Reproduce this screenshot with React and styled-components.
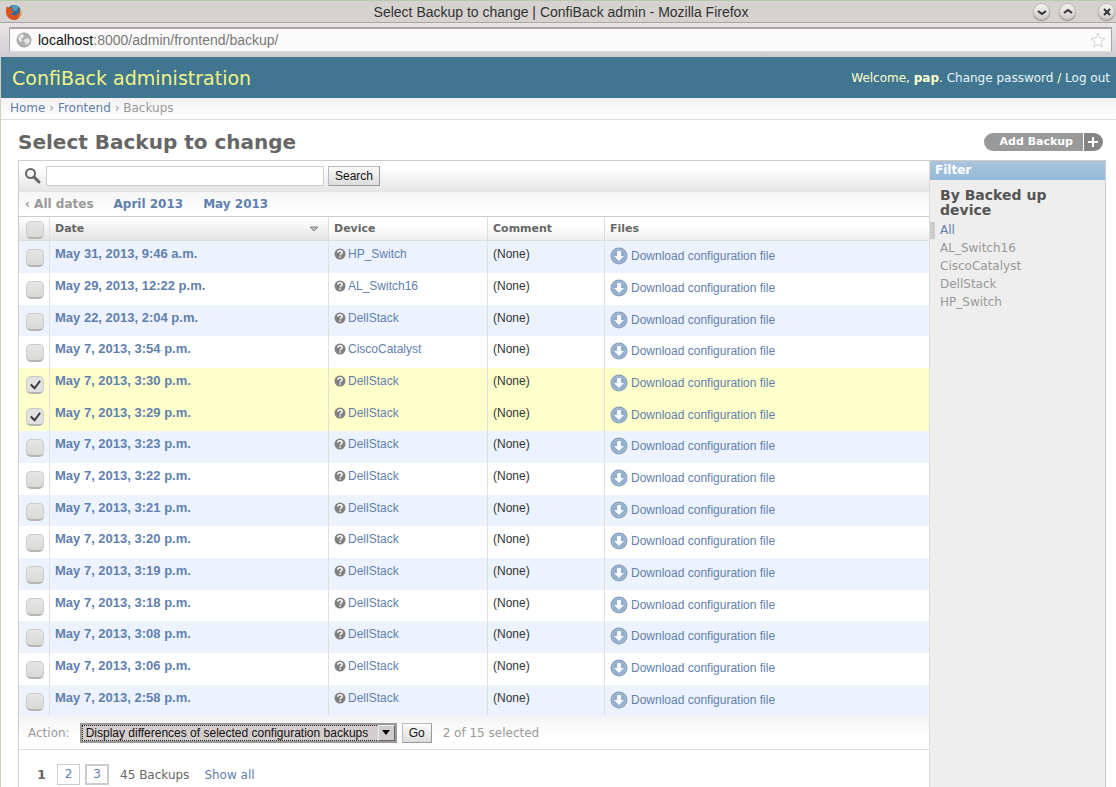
import React, { useState } from "react";
import styled, { createGlobalStyle, css } from "styled-components";

const devices = ["AL_Switch16", "CiscoCatalyst", "DellStack", "HP_Switch"];

const initialBackups = [
  { date: "May 31, 2013, 9:46 a.m.", device: "HP_Switch" },
  { date: "May 29, 2013, 12:22 p.m.", device: "AL_Switch16" },
  { date: "May 22, 2013, 2:04 p.m.", device: "DellStack" },
  { date: "May 7, 2013, 3:54 p.m.", device: "CiscoCatalyst" },
  { date: "May 7, 2013, 3:30 p.m.", device: "DellStack", selected: true },
  { date: "May 7, 2013, 3:29 p.m.", device: "DellStack", selected: true },
  { date: "May 7, 2013, 3:23 p.m.", device: "DellStack" },
  { date: "May 7, 2013, 3:22 p.m.", device: "DellStack" },
  { date: "May 7, 2013, 3:21 p.m.", device: "DellStack" },
  { date: "May 7, 2013, 3:20 p.m.", device: "DellStack" },
  { date: "May 7, 2013, 3:19 p.m.", device: "DellStack" },
  { date: "May 7, 2013, 3:18 p.m.", device: "DellStack" },
  { date: "May 7, 2013, 3:08 p.m.", device: "DellStack" },
  { date: "May 7, 2013, 3:06 p.m.", device: "DellStack" },
  { date: "May 7, 2013, 2:58 p.m.", device: "DellStack" },
];

const FirefoxIcon = () => (
  <svg width="18" height="18" viewBox="0 0 18 18" aria-hidden="true">
    <circle cx="9" cy="9" r="7" fill="#2b6c9c" />
    <path d="M7 3c2-1 5-1 7 1l-2 1 1 2-3 1-2-1z" fill="#4fa3c4" />
    <path
      d="M2 3c0 1 1 1 2 2 1-1 3-1 4 0L6 7c1 1 2 1 3 1 0 2-2 2-3 3 2 2 6 2 8-1 1-2 1-4 0-6 2 2 3 5 2 8-1 3-4 5-7 5-5 0-8-4-8-8 0-2 0-4 1-6z"
      fill="#d9541e"
    />
    <path d="M15 5c2 4 1 8-2 10 1-2 2-3 2-5z" fill="#f2b13c" />
  </svg>
);

const GlobeIcon = () => (
  <svg width="16" height="16" viewBox="0 0 16 16" aria-hidden="true">
    <circle cx="8" cy="8" r="7" fill="#b0b0b0" stroke="#a0a0a0" />
    <path d="M2 6l3-4 3 1-1 3-2 1 1 2-2 1zM9 7l3-1 2 2-1 3-3 2-1-3-2-1z" fill="#e6e6e6" />
  </svg>
);

const StarIcon = () => (
  <svg width="18" height="18" viewBox="0 0 18 18" aria-hidden="true">
    <path
      d="M9 2l2 5 5 .5-4 3.500 1.200 5L9 13.500 4.800 16 6 11 2 7.500 7 7z"
      fill="#fff"
      stroke="#d0d0d0"
    />
  </svg>
);

const SearchIcon = () => (
  <svg width="18" height="18" viewBox="0 0 18 18" aria-hidden="true">
    <circle cx="6.500" cy="6.500" r="4.500" fill="none" stroke="#666" strokeWidth="2" />
    <path d="M10 10l5 5" stroke="#666" strokeWidth="3" strokeLinecap="round" />
  </svg>
);

const UnknownIcon = () => (
  <svg width="12" height="12" viewBox="0 0 12 12" aria-hidden="true">
    <circle cx="6" cy="6" r="5.500" fill="#808080" />
    <path
      d="M3.800 4.700c0-2.700 4.400-2.600 4.400-.2 0 1.400-2.100 1.300-2.100 2.700M6.100 8.200v1.500"
      fill="none"
      stroke="#fff"
      strokeWidth="1.400"
    />
  </svg>
);

const DownloadIcon = () => (
  <svg width="18" height="18" viewBox="0 0 18 18" aria-hidden="true">
    <circle cx="9" cy="9" r="8.500" fill="#86a0c0" />
    <circle cx="9" cy="9" r="6.800" fill="#92aecb" stroke="#a9bfd8" />
    <path d="M7 4h4v5h3l-5 5-5-5h3z" fill="#f6f9fd" />
  </svg>
);

const TitleBar = () => (
  <TitleRow>
    <FirefoxIcon />
    <WindowTitle>Select Backup to change | ConfiBack admin - Mozilla Firefox</WindowTitle>
    <WindowButtons>
      <RoundButton aria-label="Minimize">
        <svg width="10" height="10" viewBox="0 0 10 10"><path d="M1 4l4 3 4-3" /></svg>
      </RoundButton>
      <RoundButton aria-label="Maximize">
        <svg width="10" height="10" viewBox="0 0 10 10"><path d="M1 6l4-3 4 3" /></svg>
      </RoundButton>
      <RoundButton aria-label="Close" $spaced>
        <svg width="10" height="10" viewBox="0 0 10 10"><path d="M2 2l6 6M8 2l-6 6" /></svg>
      </RoundButton>
    </WindowButtons>
  </TitleRow>
);

const BackupRow = ({ backup, onToggle }) => (
  <Row $selected={backup.selected}>
    <Cell $check>
      <Checkbox
        type="checkbox"
        aria-label={`Select ${backup.date}`}
        checked={!!backup.selected}
        onChange={onToggle}
      />
    </Cell>
    <DateCell scope="row">
      <Link href="#backup">{backup.date}</Link>
    </DateCell>
    <Cell>
      <DeviceLink href="#device">
        <UnknownIcon />
        {backup.device}
      </DeviceLink>
    </Cell>
    <Cell>(None)</Cell>
    <Cell>
      <DownloadLink href="#download">
        <DownloadIcon />
        Download configuration file
      </DownloadLink>
    </Cell>
  </Row>
);

const App = () => {
  const [backups, setBackups] = useState(initialBackups);
  const count = backups.filter((b) => b.selected).length;

  const toggle = (index) => {
    setBackups(
      backups.map((b, i) => (i === index ? { ...b, selected: !b.selected } : b))
    );
  };

  const toggleAll = (ev) => {
    setBackups(backups.map((b) => ({ ...b, selected: ev.target.checked })));
  };

  return (
    <Window>
      <GlobalStyle />
      <TitleBar />
      <AddressRow>
        <AddressBox>
          <GlobeIcon />
          <Address aria-label="Address">
            <b>localhost</b>:8000/admin/frontend/backup/
          </Address>
          <StarIcon />
        </AddressBox>
      </AddressRow>

      <Page>
        <Header>
          <SiteName>ConfiBack administration</SiteName>
          <UserTools>
            Welcome, <strong>pap</strong>. <a href="#password">Change password</a> /{" "}
            <a href="#logout">Log out</a>
          </UserTools>
        </Header>
        <Breadcrumbs>
          <Link href="#home">Home</Link> › <Link href="#frontend">Frontend</Link> › Backups
        </Breadcrumbs>

        <Content>
          <HeadingRow>
            <Heading>Select Backup to change</Heading>
            <AddLink href="#add">
              <AddLabel>Add Backup</AddLabel>
              <AddPlus>
                <svg width="12" height="12" viewBox="0 0 12 12" aria-hidden="true">
                  <path d="M6 1v10M1 6h10" stroke="#fff" strokeWidth="2" />
                </svg>
              </AddPlus>
            </AddLink>
          </HeadingRow>

          <Module>
            <Main>
              <Toolbar>
                <SearchLabel htmlFor="searchbar" aria-label="Search backups">
                  <SearchIcon />
                </SearchLabel>
                <SearchInput id="searchbar" type="text" />
                <Button>Search</Button>
              </Toolbar>
              <DateNav>
                <MutedLink href="#all">‹ All dates</MutedLink>
                <Link href="#april">April 2013</Link>
                <Link href="#may">May 2013</Link>
              </DateNav>

              <Table>
                <colgroup>
                  <Col $width={31} />
                  <Col $width={279} />
                  <Col $width={159} />
                  <Col $width={117} />
                  <col />
                </colgroup>
                <thead>
                  <tr>
                    <HeadCell $check>
                      <Checkbox
                        type="checkbox"
                        aria-label="Select all backups"
                        checked={count === backups.length}
                        onChange={toggleAll}
                      />
                    </HeadCell>
                    <HeadCell $sorted>
                      <SortLabel>
                        Date
                        <svg width="10" height="6" viewBox="0 0 10 6" aria-hidden="true">
                          <path d="M1 1h8L5 5z" fill="#bbb" stroke="#888" />
                        </svg>
                      </SortLabel>
                    </HeadCell>
                    <HeadCell>Device</HeadCell>
                    <HeadCell>Comment</HeadCell>
                    <HeadCell>Files</HeadCell>
                  </tr>
                </thead>
                <tbody>
                  {backups.map((backup, index) => (
                    <BackupRow
                      key={backup.date}
                      backup={backup}
                      onToggle={() => toggle(index)}
                    />
                  ))}
                </tbody>
              </Table>

              <Actions>
                <label htmlFor="action">Action:</label>
                <SelectWrapper>
                  <Select id="action">
                    <option>Display differences of selected configuration backups</option>
                  </Select>
                  <SelectArrow>
                    <svg width="8" height="5" viewBox="0 0 8 5"><path d="M0 0h8L4 5z" /></svg>
                  </SelectArrow>
                </SelectWrapper>
                <Button>Go</Button>
                <Counter>
                  {count} of {backups.length} selected
                </Counter>
              </Actions>

              <Paginator>
                <CurrentPage>1</CurrentPage>
                <PageLink href="#2">2</PageLink>
                <PageLink href="#3" $last>3</PageLink>
                <Total>45 Backups</Total>
                <Link href="#all">Show all</Link>
              </Paginator>
            </Main>

            <Filter>
              <FilterTitle>Filter</FilterTitle>
              <FilterHeading>By Backed up device</FilterHeading>
              <FilterList>
                <FilterItem $active>
                  <a href="#filter">All</a>
                </FilterItem>
                {devices.map((device) => (
                  <FilterItem key={device}>
                    <a href="#filter">{device}</a>
                  </FilterItem>
                ))}
              </FilterList>
            </Filter>
          </Module>
        </Content>
      </Page>
    </Window>
  );
};

const sans = `"Liberation Sans", Arial, sans-serif`;
const verdana = `"DejaVu Sans", Verdana, sans-serif`;

const GlobalStyle = createGlobalStyle`
  * {
    box-sizing: border-box;
  }

  body {
    margin: 0;
    background: white;
    color: #333;
    font-family: ${verdana};
    font-size: 12px;
  }

  a {
    text-decoration: none;
  }
`;

const Window = styled.div`
  display: flex;
  flex-direction: column;
  min-height: 100vh;
`;

const TitleRow = styled.div`
  display: flex;
  align-items: center;
  height: 23px;
  padding: 0 1px 0 5px;
  background: #d5d2d0;
  border-top: 1px solid #b5cbaa;
  border-bottom: 1px solid #aaa6a4;
`;

const WindowTitle = styled.div`
  flex: 1;
  padding-left: 66px;
  text-align: center;
  color: #333;
  font: 14px/20px ${sans};
`;

const WindowButtons = styled.div`
  display: flex;
  gap: 9px;
`;

const RoundButton = styled.button`
  display: flex;
  align-items: center;
  justify-content: center;
  width: 17px;
  height: 17px;
  padding: 0;
  margin-left: ${(p) => (p.$spaced ? "13px" : "0")};
  border: 1px solid #bbb7b4;
  border-radius: 50%;
  background: linear-gradient(#f4f3f2, #cfccca);
  box-shadow: 0 1px 1px #8c8986;

  svg {
    flex-shrink: 0;
  }

  path {
    fill: none;
    stroke: #333;
    stroke-width: 2;
  }
`;

const AddressRow = styled.div`
  padding: 4px 4px 5px 9px;
  background: linear-gradient(#e8e6e5, #cfcdd2);
`;

const AddressBox = styled.div`
  display: flex;
  align-items: center;
  gap: 6px;
  height: 25px;
  padding: 0 4px 0 6px;
  background: #fcfbfb;
  border: 1px solid #aaa5a3;
  border-top-width: 2px;
  border-bottom-color: #ddd;
`;

const Address = styled.div`
  flex: 1;
  color: #777;
  font: 14px/20px ${sans};

  b {
    color: #111;
    font-weight: normal;
  }
`;

const Page = styled.div`
  display: flex;
  flex: 1;
  flex-direction: column;
  border-left: 1px solid #cfd0c0;
`;

const Header = styled.header`
  display: flex;
  align-items: center;
  justify-content: space-between;
  height: 41px;
  padding: 0 6px 0 11px;
  background: #417690;
  color: #ffc;
`;

const SiteName = styled.h1`
  margin: 0;
  color: #f0f386;
  font-size: 19px;
  font-weight: normal;
`;

const UserTools = styled.div`
  font-size: 12px;

  a {
    color: #e8f4f8;
  }
`;

const Breadcrumbs = styled.nav`
  height: 22px;
  padding: 0 9px;
  background: linear-gradient(#f3f1f3, white);
  border-bottom: 1px solid #ddd;
  color: #999;
  font-size: 12px;
  line-height: 20px;
`;

const Link = styled.a`
  color: #5f80ae;
`;

const MutedLink = styled(Link)`
  color: #999;
`;

const Content = styled.main`
  display: flex;
  flex: 1;
  flex-direction: column;
  padding: 0 10px 0 17px;
`;

const HeadingRow = styled.div`
  display: flex;
  align-items: center;
  justify-content: space-between;
  height: 40px;
  padding: 4px 3px 0 0;
`;

const Heading = styled.h2`
  margin: 0;
  color: #666;
  font-size: 20px;
  line-height: 24px;
`;

const AddLink = styled.a`
  display: flex;
  gap: 1px;
  height: 18px;
  color: white;
  font-weight: bold;
  line-height: 18px;
`;

const AddLabel = styled.span`
  padding: 0 10px 0 16px;
  border-radius: 9px 0 0 9px;
  background: #999;
  font-size: 11px;
`;

const AddPlus = styled.span`
  display: flex;
  align-items: center;
  padding: 0 4px 0 3px;
  border-radius: 0 9px 9px 0;
  background: #858585;
`;

const Module = styled.section`
  display: flex;
  flex: 1;
  border: 1px solid #ccc;
  border-bottom: 0;
`;

const Main = styled.div`
  flex: 1;
  min-width: 0;
`;

const Toolbar = styled.form`
  display: flex;
  align-items: center;
  gap: 4px;
  height: 31px;
  padding: 0 5px 1px;
  background: linear-gradient(white 20%, #e4e4e4);
`;

const SearchLabel = styled.label`
  display: flex;
`;

const SearchInput = styled.input`
  width: 278px;
  height: 20px;
  padding: 0 4px;
  border: 1px solid #ccc;
  font: 12px ${sans};
`;

const Button = styled.button`
  height: 20px;
  padding: 0 6px;
  border: 1px solid #bbb;
  border-right-color: #999;
  border-bottom-color: #999;
  background: linear-gradient(#fafafa, #ddd);
  color: #111;
  font: 12px ${sans};
`;

const DateNav = styled.nav`
  display: flex;
  gap: 20px;
  height: 24px;
  padding: 0 6px;
  background: linear-gradient(#f6f6f6, white);
  font-weight: bold;
  font-size: 12px;
  line-height: 24px;
`;

const Table = styled.table`
  width: 100%;
  table-layout: fixed;
  border-collapse: separate;
  border-spacing: 0;
  font: 12px/14px ${sans};
`;

const Col = styled.col`
  width: ${(p) => p.$width}px;
`;

const HeadCell = styled.th`
  height: 25px;
  padding: ${(p) => (p.$check ? "4px 6px 0 7px" : "5px 5px 0")};
  border-top: 1px solid #ccc;
  border-bottom: 1px solid #ddd;
  border-right: 1px solid #ddd;
  background: ${(p) =>
    p.$sorted || p.$check
      ? "linear-gradient(white, #e4e4e4)"
      : "linear-gradient(white 40%, #eee)"};
  color: #666;
  font: bold 11px/14px ${verdana};
  text-align: left;
  vertical-align: top;

  &:last-child {
    border-right: 0;
  }
`;

const SortLabel = styled.span`
  display: flex;
  align-items: center;
  justify-content: space-between;
  padding-right: 4px;
`;

const cell = css`
  padding: 6px 5px 0;
  border-right: 1px solid #e0e0e0;
  text-align: left;
  vertical-align: top;
`;

const Cell = styled.td`
  ${cell}
  ${(p) => p.$check && "padding: 8px 6px 0 7px;"}

  &:last-child {
    border-right: 0;
  }
`;

const DateCell = styled.th`
  ${cell}
  font-size: 13px;
`;

const Row = styled.tr`
  height: 32px;
  background: ${(p) => (p.$selected ? "#ffc" : "white")};

  &:nth-child(odd) {
    background: ${(p) => (p.$selected ? "#ffc" : "#edf3fe")};
  }

  &:nth-child(3n) {
    height: 31px;
  }
`;

const Checkbox = styled.input`
  display: block;
  width: 18px;
  height: 18px;
  margin: 0;
  appearance: none;
  border: 1px solid #ccc;
  border-bottom: 2px solid #b4b4b4;
  border-radius: 5px;
  background: linear-gradient(#e6e6e6, #d9d9d6);

  &:checked {
    background: #e2e2e2
      url("data:image/svg+xml,%3Csvg xmlns='http://www.w3.org/2000/svg' viewBox='0 0 16 16'%3E%3Cpath d='M3 8l4 4 6-8' fill='none' stroke='%23333' stroke-width='2'/%3E%3C/svg%3E")
      center / contain no-repeat;
  }
`;

const DeviceLink = styled(Link)`
  display: flex;
  align-items: center;
  gap: 2px;
`;

const DownloadLink = styled(Link)`
  display: flex;
  align-items: center;
  gap: 3px;
`;

const Actions = styled.form`
  display: flex;
  align-items: center;
  gap: 5px;
  height: 34px;
  padding: 0 9px;
  border-bottom: 1px solid #ddd;
  background: linear-gradient(#f3f3f3, white 60%);
  color: #999;

  label {
    margin-right: 5px;
  }
`;

const SelectWrapper = styled.div`
  position: relative;
`;

const Select = styled.select`
  display: block;
  width: 317px;
  height: 20px;
  padding: 0 20px 0 4px;
  appearance: none;
  border: 2px solid #999;
  border-radius: 0;
  outline: 1px dotted #222;
  outline-offset: -3px;
  background: #d5cdcd;
  color: #111;
  font: 12px ${sans};
`;

const SelectArrow = styled.span`
  position: absolute;
  top: 2px;
  right: 2px;
  display: flex;
  align-items: center;
  justify-content: center;
  width: 17px;
  height: 16px;
  border: 1px solid #eee;
  border-right-color: #666;
  border-bottom-color: #666;
  background: #d0cccc;
  pointer-events: none;
`;

const Counter = styled.span`
  margin-left: 6px;
`;

const Paginator = styled.div`
  display: flex;
  align-items: center;
  height: 37px;
  padding: 12px 18px 0;
  color: #666;
`;

const CurrentPage = styled.strong`
  margin-right: 11px;
  font-size: 13px;
`;

const PageLink = styled(Link)`
  width: ${(p) => (p.$last ? "24px" : "23px")};
  height: 21px;
  margin-right: ${(p) => (p.$last ? "11px" : "5px")};
  border: ${(p) => (p.$last ? "2px" : "1px")} solid #ccc;
  line-height: ${(p) => (p.$last ? "17px" : "19px")};
  text-align: center;
`;

const Total = styled.span`
  margin-right: 15px;
`;

const Filter = styled.aside`
  width: 176px;
  border-left: 1px solid #ddd;
  background: #eee;
`;

const FilterTitle = styled.h2`
  height: 19px;
  margin: 0;
  padding: 0 5px;
  background: linear-gradient(#abc4db, #93bad9);
  color: white;
  font-size: 12px;
  line-height: 18px;
`;

const FilterHeading = styled.h3`
  margin: 8px 40px 4px 10px;
  color: #555;
  font-size: 14px;
  line-height: 15px;
`;

const FilterList = styled.ul`
  margin: 0;
  padding: 0;
  list-style: none;
`;

const FilterItem = styled.li`
  padding-left: ${(p) => (p.$active ? "5px" : "10px")};
  border-left: ${(p) => (p.$active ? "5px solid #ccc" : "0")};
  line-height: ${(p) => (p.$active ? "17px" : "18px")};

  a {
    color: ${(p) => (p.$active ? "#5f80ae" : "#999")};
  }
`;

export default App;
